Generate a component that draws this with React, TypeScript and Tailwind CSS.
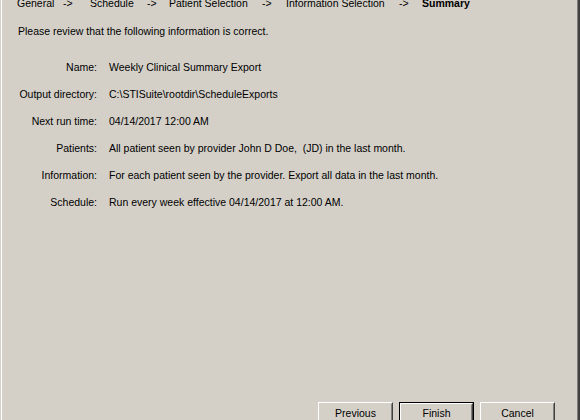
import React from "react";

const font = { fontFamily: '"Liberation Sans", Arial, sans-serif' };

function Btn({ label, def }: { label: string; def?: boolean }) {
  const inner = (
    <div className="border border-t-white border-l-white border-r-[#404040] border-b-[#404040] h-full">
      <div
        className={
          def
            ? "border border-t-[#d4d0c8] border-l-[#d4d0c8] border-r-[#808080] border-b-[#808080] h-full flex items-start justify-center pt-[2px] text-black"
            : "border border-t-[#d4d0c8] border-l-[#d4d0c8] border-r-[#808080] border-b-[#808080] h-full flex items-start justify-center pt-[3px] text-black"
        }
      >
        {label}
      </div>
    </div>
  );
  return def ? (
    <div className="w-[75px] h-[23px] border border-black">{inner}</div>
  ) : (
    <div className="w-[75px] h-[23px]">{inner}</div>
  );
}

const rows: [string, string][] = [
  ["Name:", "Weekly Clinical Summary Export"],
  ["Output directory:", "C:\\STISuite\\rootdir\\ScheduleExports"],
  ["Next run time:", "04/14/2017 12:00 AM"],
  ["Patients:", "All patient seen by provider John D Doe,  (JD) in the last month."],
  ["Information:", "For each patient seen by the provider. Export all data in the last month."],
  ["Schedule:", "Run every week effective 04/14/2017 at 12:00 AM."],
];

export default function App() {
  return (
    <div className="w-[580px] h-[420px] bg-[#d4d0c8] overflow-hidden pl-px border-r-2 border-[#404040] text-[10.5px] leading-[13px] text-black" style={font}>
      <div className="h-full border-l border-white border-r border-r-[#808080] flex flex-col">
        <div className="flex -mt-[3px] pl-[15px] whitespace-pre">
          <span className="w-[46px]">General</span>
          <span className="w-[27px]">-&gt;</span>
          <span className="w-[57px]">Schedule</span>
          <span className="w-[22px]">-&gt;</span>
          <span className="w-[93px]">Patient Selection</span>
          <span className="w-[24px]">-&gt;</span>
          <span className="w-[113px]">Information Selection</span>
          <span className="w-[23px]">-&gt;</span>
          <span className="font-bold">Summary</span>
        </div>
        <div className="mt-[15px] pl-[16px]">Please review that the following information is correct.</div>
        <div className="mt-[23px] flex flex-col gap-[14px]">
          {rows.map(([l, v]) => (
            <div key={l} className="flex whitespace-pre">
              <div className="w-[95px] text-right">{l}</div>
              <div className="ml-[12px]">{v}</div>
            </div>
          ))}
        </div>
        <div className="mt-auto -mb-[5px] flex justify-end gap-[6px] pr-[22px]">
          <Btn label="Previous" />
          <Btn label="Finish" def />
          <Btn label="Cancel" />
        </div>
      </div>
    </div>
  );
}
